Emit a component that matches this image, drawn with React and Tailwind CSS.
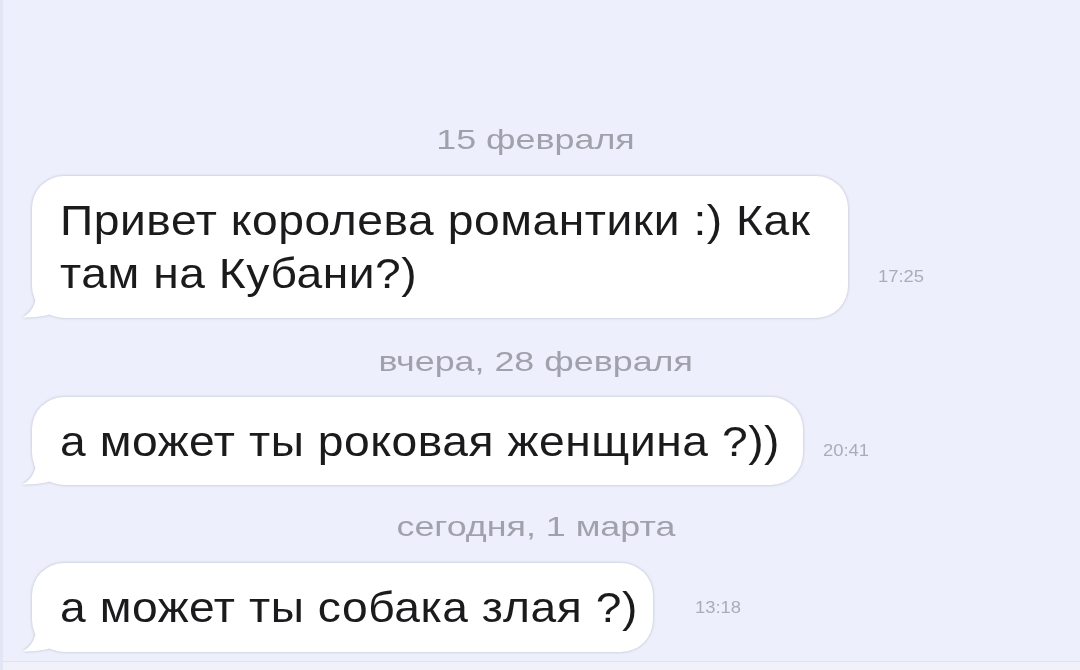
const font = { fontFamily: '"Liberation Sans", Arial, sans-serif' };

function Stretch({ children, className = "" }) {
  return (
    <span className={`inline-block origin-left scale-x-[1.1] tracking-[0.5px] whitespace-nowrap ${className}`}>
      {children}
    </span>
  );
}

function DateLabel({ children, className = "" }) {
  return (
    <div className={`-ml-[40px] flex justify-center ${className}`}>
      <span className="inline-block scale-x-[1.28] text-[28px] leading-[30px] text-[#a0a1ab]">
        {children}
      </span>
    </div>
  );
}

function Tail() {
  return (
    <svg
      className="absolute -left-[11px] bottom-0"
      width="34"
      height="36"
      viewBox="0 0 34 36"
    >
      <path
        d="M15 0 L30 0 L30 32 C24 34 15 35.5 1 35.5 C10 31 15 23 15 12 Z"
        fill="#ffffff"
      />
    </svg>
  );
}

function Bubble({ width, height, children }) {
  return (
    <div
      className="relative drop-shadow-[0_0_1.5px_rgba(80,80,100,0.35)]"
      style={{ width, height }}
    >
      <Tail />
      <div className="relative h-full w-full rounded-[32px] bg-white pl-[28px] flex flex-col justify-center text-[42px] leading-[53px] text-[#1b1b1d]">
        {children}
      </div>
    </div>
  );
}

function Time({ children, className = "" }) {
  return (
    <span className={`inline-block origin-left scale-x-[1.15] text-[16px] text-[#abacb6] ${className}`}>
      {children}
    </span>
  );
}

export default function App() {
  return (
    <div
      className="relative h-[670px] w-[1080px] overflow-hidden bg-[#edf0fc] border-l-[3px] border-[#e2e5f3]"
      style={font}
    >
      <div className="flex flex-col pl-[29px] pt-[125px]">
        <DateLabel>15 февраля</DateLabel>

        <div className="mt-[21px] flex items-center">
          <Bubble width="816px" height="142px">
            <Stretch>Привет королева романтики :) Как</Stretch>
            <Stretch>там на Кубани?)</Stretch>
          </Bubble>
          <Time className="ml-[30px] mt-[60px]">17:25</Time>
        </div>

        <DateLabel className="mt-[29px]">вчера, 28 февраля</DateLabel>

        <div className="mt-[20px] flex items-center">
          <Bubble width="771px" height="88px">
            <Stretch>а может ты роковая женщина ?))</Stretch>
          </Bubble>
          <Time className="ml-[20px] mt-[20px]">20:41</Time>
        </div>

        <DateLabel className="mt-[27px]">сегодня, 1 марта</DateLabel>

        <div className="mt-[21px] flex items-center">
          <Bubble width="621px" height="89px">
            <Stretch>а может ты собака злая ?)</Stretch>
          </Bubble>
          <Time className="ml-[42px]">13:18</Time>
        </div>
      </div>
      <div className="absolute bottom-0 left-0 right-0 h-[9px] border-t border-[#dfe2ee] bg-[#f1f2f9]" />
    </div>
  );
}
